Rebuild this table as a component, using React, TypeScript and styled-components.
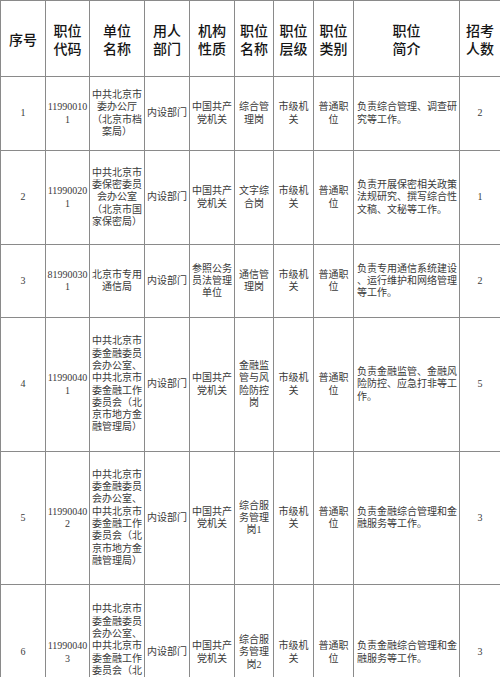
import React from "react";
import styled, { createGlobalStyle } from "styled-components";

const GlobalStyle = createGlobalStyle`
  body {
    margin: 0;
    background: #fff;
  }
`;

const Sheet = styled.table`
  width: 500px;
  border-collapse: collapse;
  table-layout: fixed;
  background: #fff;
`;

const HeadCell = styled.th`
  border: 1px solid #8a8a8a;
  padding: 0;
  height: 75px;
  font-family: "Noto Sans CJK SC", "Noto Sans", sans-serif;
  font-size: 14px;
  font-weight: 500;
  line-height: 18px;
  color: #151515;
  text-align: center;
  vertical-align: middle;
`;

const Cell = styled.td<{ $left?: boolean }>`
  border: 1px solid #8a8a8a;
  padding: 0 ${(p) => (p.$left ? "2px 0 3px" : "1px")};
  font-family: "Liberation Serif", "Noto Sans CJK SC", serif;
  font-size: 10px;
  line-height: 12.3px;
  color: #3a3a3a;
  text-align: ${(p) => (p.$left ? "left" : "center")};
  vertical-align: middle;
  white-space: nowrap;
  overflow: hidden;
`;

const Row = styled.tr<{ $h: number }>`
  height: ${(p) => p.$h}px;
`;

const widths = [45, 44, 55, 45, 45, 39, 40, 40, 106, 41];

const heads = [
  ["序号"],
  ["职位", "代码"],
  ["单位", "名称"],
  ["用人", "部门"],
  ["机构", "性质"],
  ["职位", "名称"],
  ["职位", "层级"],
  ["职位", "类别"],
  ["职位", "简介"],
  ["招考", "人数"],
];

const finance = [
  "中共北京市",
  "委金融委员",
  "会办公室、",
  "中共北京市",
  "委金融工作",
  "委员会（北",
  "京市地方金",
  "融管理局）",
];

type Job = { h: number; cells: string[][] };

const jobs: Job[] = [
  {
    h: 74,
    cells: [
      ["1"],
      ["11990010", "1"],
      ["中共北京市", "委办公厅", "（北京市档", "案局）"],
      ["内设部门"],
      ["中国共产", "党机关"],
      ["综合管", "理岗"],
      ["市级机", "关"],
      ["普通职", "位"],
      ["负责综合管理、调查研", "究等工作。"],
      ["2"],
    ],
  },
  {
    h: 94,
    cells: [
      ["2"],
      ["11990020", "1"],
      ["中共北京市", "委保密委员", "会办公室", "（北京市国", "家保密局）"],
      ["内设部门"],
      ["中国共产", "党机关"],
      ["文字综", "合岗"],
      ["市级机", "关"],
      ["普通职", "位"],
      ["负责开展保密相关政策", "法规研究、撰写综合性", "文稿、文秘等工作。"],
      ["1"],
    ],
  },
  {
    h: 73,
    cells: [
      ["3"],
      ["81990030", "1"],
      ["北京市专用", "通信局"],
      ["内设部门"],
      ["参照公务", "员法管理", "单位"],
      ["通信管", "理岗"],
      ["市级机", "关"],
      ["普通职", "位"],
      ["负责专用通信系统建设", "、运行维护和网络管理", "等工作。"],
      ["2"],
    ],
  },
  {
    h: 134,
    cells: [
      ["4"],
      ["11990040", "1"],
      finance,
      ["内设部门"],
      ["中国共产", "党机关"],
      ["金融监", "管与风", "险防控", "岗"],
      ["市级机", "关"],
      ["普通职", "位"],
      ["负责金融监管、金融风", "险防控、应急打非等工", "作。"],
      ["5"],
    ],
  },
  {
    h: 133,
    cells: [
      ["5"],
      ["11990040", "2"],
      finance,
      ["内设部门"],
      ["中国共产", "党机关"],
      ["综合服", "务管理", "岗1"],
      ["市级机", "关"],
      ["普通职", "位"],
      ["负责金融综合管理和金", "融服务等工作。"],
      ["3"],
    ],
  },
  {
    h: 136,
    cells: [
      ["6"],
      ["11990040", "3"],
      finance,
      ["内设部门"],
      ["中国共产", "党机关"],
      ["综合服", "务管理", "岗2"],
      ["市级机", "关"],
      ["普通职", "位"],
      ["负责金融综合管理和金", "融服务等工作。"],
      ["3"],
    ],
  },
];

function Lines({ lines }: { lines: string[] }) {
  return (
    <>
      {lines.map((l, i) => (
        <React.Fragment key={i}>
          {i > 0 && <br />}
          {l}
        </React.Fragment>
      ))}
    </>
  );
}

export default function App() {
  return (
    <>
      <GlobalStyle />
      <Sheet>
        <colgroup>
          {widths.map((w, i) => (
            <col key={i} style={{ width: w }} />
          ))}
        </colgroup>
        <thead>
          <tr>
            {heads.map((h, i) => (
              <HeadCell key={i}>
                <Lines lines={h} />
              </HeadCell>
            ))}
          </tr>
        </thead>
        <tbody>
          {jobs.map((job, r) => (
            <Row key={r} $h={job.h}>
              {job.cells.map((c, i) => (
                <Cell key={i} $left={i === 8}>
                  <Lines lines={c} />
                </Cell>
              ))}
            </Row>
          ))}
        </tbody>
      </Sheet>
    </>
  );
}
